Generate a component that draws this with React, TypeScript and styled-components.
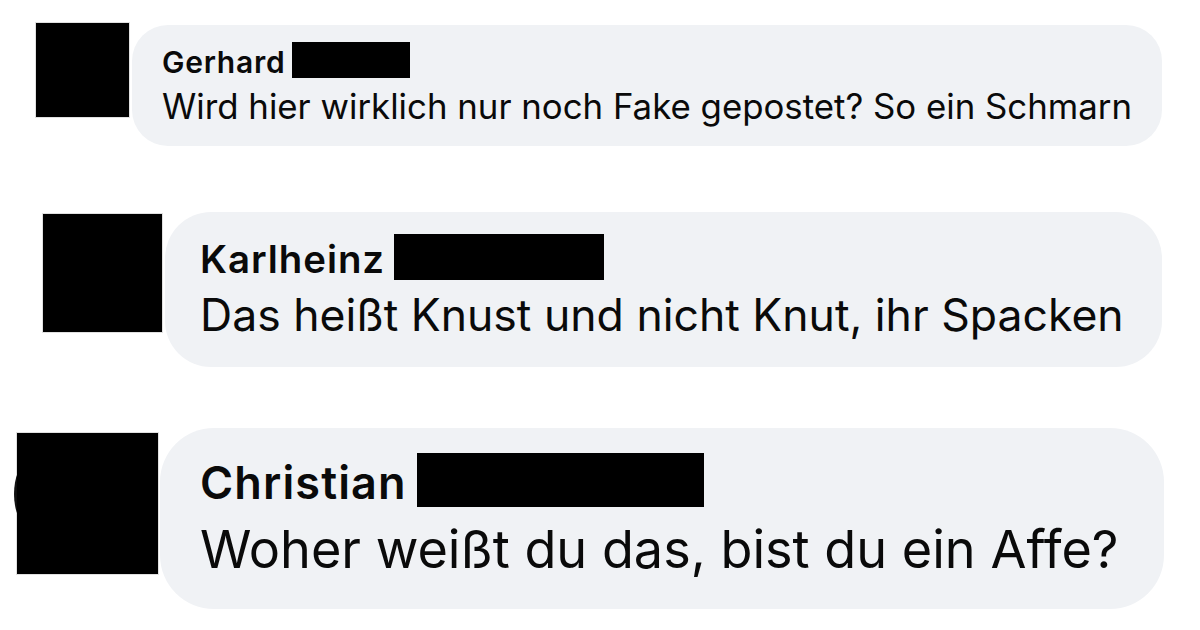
import React from "react";
import styled, { createGlobalStyle, css } from "styled-components";

const Global = createGlobalStyle`
  html, body { margin: 0; padding: 0; background: #ffffff; }
  body { font-family: Inter, "Noto Sans", "Liberation Sans", sans-serif; }
`;

const Page = styled.div`
  width: 1200px;
  height: 630px;
  box-sizing: border-box;
  padding-top: 25px;
  background: #ffffff;
  overflow: hidden;
  display: flex;
  flex-direction: column;
`;

const Row = styled.div<{ $indent: number; $top: number }>`
  display: flex;
  align-items: flex-start;
  isolation: isolate;
  padding-left: ${(p) => p.$indent}px;
  margin-top: ${(p) => p.$top}px;
`;

const Avatar = styled.div<{ $w: number; $h: number; $dy: number; $bump?: boolean }>`
  position: relative;
  flex-shrink: 0;
  width: ${(p) => p.$w}px;
  height: ${(p) => p.$h}px;
  margin-top: ${(p) => p.$dy}px;
  background: #000000;
  box-shadow: 0 0 0 1px rgba(0, 0, 0, 0.12);
  ${(p) =>
    p.$bump &&
    css`
      &::before {
        content: "";
        position: absolute;
        z-index: -1;
        left: -3px;
        top: 30px;
        width: 28px;
        height: 62px;
        border-radius: 50%;
        background: #111111;
      }
    `}
`;

const Bubble = styled.div<{ $s: number; $pad: number; $gap: number }>`
  margin-left: ${(p) => p.$gap}px;
  background: #f0f2f5;
  border-radius: ${(p) => 36 * p.$s}px;
  padding: ${(p) => 17 * p.$s}px ${(p) => 30 * p.$s}px ${(p) => 19 * p.$s}px
    ${(p) => p.$pad}px;
  display: flex;
  flex-direction: column;
  color: #0a0a0a;
`;

const NameRow = styled.div<{ $s: number }>`
  display: flex;
  align-items: center;
  height: ${(p) => 36 * p.$s}px;
`;

const Name = styled.span<{ $s: number }>`
  font-size: ${(p) => 30 * p.$s}px;
  line-height: ${(p) => 36 * p.$s}px;
  font-weight: 600;
  letter-spacing: ${(p) => 0.75 * p.$s}px;
  white-space: nowrap;
  position: relative;
  top: ${(p) => 2 * p.$s}px;
`;

const Redaction = styled.span<{ $s: number; $w: number }>`
  display: block;
  width: ${(p) => p.$w}px;
  height: ${(p) => 36 * p.$s}px;
  margin-left: ${(p) => 7 * p.$s}px;
  background: #000000;
`;

const Body = styled.div<{ $s: number }>`
  font-size: ${(p) => 34.8 * p.$s}px;
  line-height: ${(p) => 42 * p.$s}px;
  font-weight: 400;
  margin-top: ${(p) => 7 * p.$s}px;
  white-space: nowrap;
`;

type CommentData = {
  first: string;
  text: string;
  s: number;
  indent: number;
  top: number;
  avatarW: number;
  avatarH: number;
  avatarDy: number;
  gap: number;
  pad: number;
  barW: number;
  bump?: boolean;
};

const comments: CommentData[] = [
  {
    first: "Gerhard",
    text: "Wird hier wirklich nur noch Fake gepostet? So ein Schmarn",
    s: 1,
    indent: 36,
    top: 0,
    avatarW: 93,
    avatarH: 94,
    avatarDy: -2,
    gap: 3,
    pad: 30,
    barW: 118,
  },
  {
    first: "Karlheinz",
    text: "Das heißt Knust und nicht Knut, ihr Spacken",
    s: 1.28,
    indent: 43,
    top: 66,
    avatarW: 119,
    avatarH: 118,
    avatarDy: 2,
    gap: 3,
    pad: 35,
    barW: 210,
  },
  {
    first: "Christian",
    text: "Woher weißt du das, bist du ein Affe?",
    s: 1.5,
    indent: 17,
    top: 61,
    avatarW: 141,
    avatarH: 141,
    avatarDy: 5,
    gap: 2,
    pad: 40,
    barW: 287,
    bump: true,
  },
];

function Comment({ c }: { c: CommentData }) {
  return (
    <Row $indent={c.indent} $top={c.top}>
      <Avatar $w={c.avatarW} $h={c.avatarH} $dy={c.avatarDy} $bump={c.bump} />
      <Bubble $s={c.s} $pad={c.pad} $gap={c.gap}>
        <NameRow $s={c.s}>
          <Name $s={c.s}>{c.first}</Name>
          <Redaction $s={c.s} $w={c.barW} />
        </NameRow>
        <Body $s={c.s}>{c.text}</Body>
      </Bubble>
    </Row>
  );
}

export default function App() {
  return (
    <>
      <Global />
      <Page>
        {comments.map((c) => (
          <Comment key={c.first} c={c} />
        ))}
      </Page>
    </>
  );
}
